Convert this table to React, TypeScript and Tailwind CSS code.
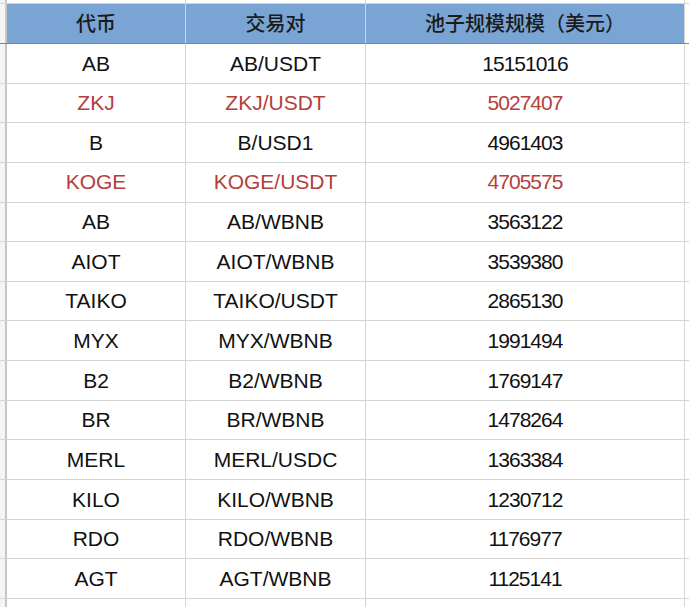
const rows: { token: string; pair: string; size: string; red?: boolean }[] = [
  { token: 'AB', pair: 'AB/USDT', size: '15151016' },
  { token: 'ZKJ', pair: 'ZKJ/USDT', size: '5027407', red: true },
  { token: 'B', pair: 'B/USD1', size: '4961403' },
  { token: 'KOGE', pair: 'KOGE/USDT', size: '4705575', red: true },
  { token: 'AB', pair: 'AB/WBNB', size: '3563122' },
  { token: 'AIOT', pair: 'AIOT/WBNB', size: '3539380' },
  { token: 'TAIKO', pair: 'TAIKO/USDT', size: '2865130' },
  { token: 'MYX', pair: 'MYX/WBNB', size: '1991494' },
  { token: 'B2', pair: 'B2/WBNB', size: '1769147' },
  { token: 'BR', pair: 'BR/WBNB', size: '1478264' },
  { token: 'MERL', pair: 'MERL/USDC', size: '1363384' },
  { token: 'KILO', pair: 'KILO/WBNB', size: '1230712' },
  { token: 'RDO', pair: 'RDO/WBNB', size: '1176977' },
  { token: 'AGT', pair: 'AGT/WBNB', size: '1125141' },
];

const font = { fontFamily: '"Liberation Sans", "Noto Sans CJK SC", sans-serif' };

function Row({ cells, className, cellClass, header }: { cells: string[]; className: string; cellClass: string; header?: boolean }) {
  const widths = ['w-[179px]', 'w-[180px]', 'w-[319px]'];
  return (
    <div className={`flex box-border ${className}`}>
      <div className="w-[7px] shrink-0 bg-[#f4f4f4] border-r-2 border-[#c6c6c6]" />
      {cells.map((c, i) => (
        <div
          key={i}
          className={`${widths[i]} shrink-0 flex items-center justify-center border-r border-[#d4d4d4] ${cellClass} ${
            header ? 'bg-[#79a4d4] text-[20px] font-medium' : i === 2 ? 'tracking-[-1px]' : ''
          }`}
        >
          {c}
        </div>
      ))}
      <div className="flex-1 bg-white" />
    </div>
  );
}

export default function App() {
  return (
    <div className="w-[689px] h-[607px] overflow-hidden bg-white text-[21px]" style={font}>
      <Row cells={['', '', '']} className="h-[4px] border-b border-[#d4d4d4]" cellClass="" />
      <Row
        cells={['代币', '交易对', '池子规模规模（美元）']}
        className="h-[40px] border-b border-[#5f8bbd]"
        cellClass="text-[#1b1b1b]"
        header
      />
      {rows.map((r, i) => (
        <Row
          key={i}
          cells={[r.token, r.pair, r.size]}
          className="h-[39.65px] border-b border-[#d4d4d4]"
          cellClass={r.red ? 'text-[#b3403b]' : 'text-[#111111]'}
        />
      ))}
      <Row cells={['', '', '']} className="h-[20px]" cellClass="" />
    </div>
  );
}
